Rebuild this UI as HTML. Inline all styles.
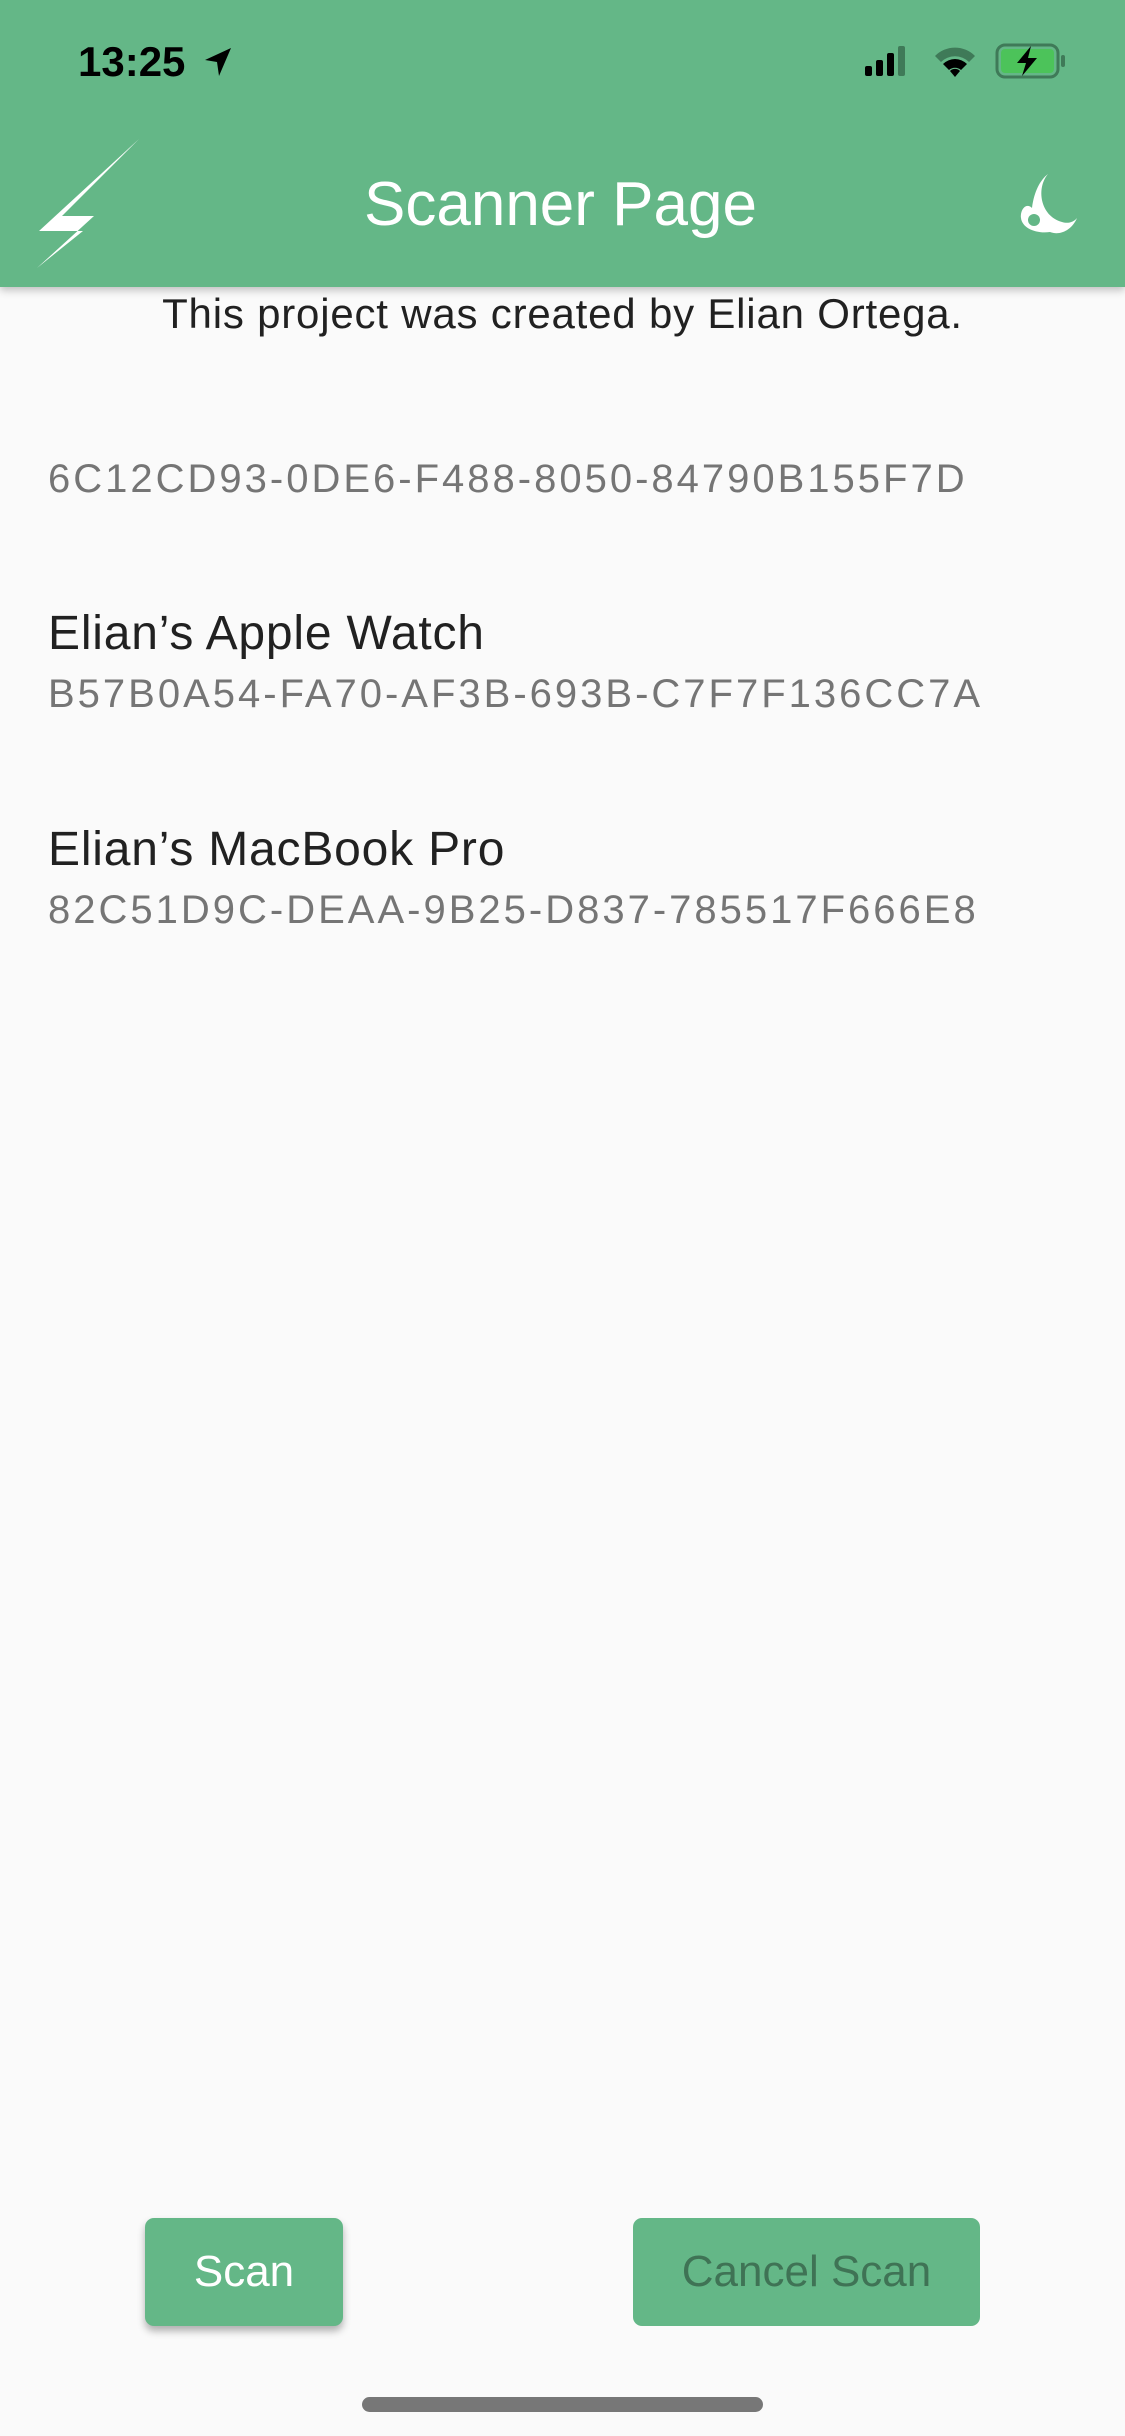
<!DOCTYPE html>
<html><head><meta charset="utf-8"><style>
*{margin:0;padding:0;box-sizing:border-box}
body{width:1125px;height:2436px;background:#fafafa;font-family:"Liberation Sans",sans-serif;position:relative;overflow:hidden}
.hdr{position:absolute;left:0;top:0;width:1125px;height:287px;background:#64b787;box-shadow:0 3px 8px rgba(0,0,0,.25)}
.abs{position:absolute;white-space:nowrap}
.uuid{font-size:40px;color:#757575;letter-spacing:3px;left:48px}
.name{font-size:48px;color:#212121;left:48px;letter-spacing:.8px}
.btn{position:absolute;background:#64b787;border-radius:9px;display:flex;align-items:center;justify-content:center;font-size:44px}
</style></head><body>
<div class="hdr">
 <div class="abs" style="left:78px;top:38px;font-size:42px;font-weight:bold;color:#000">13:25</div>
 <svg class="abs" style="left:203px;top:46px" width="30" height="32" viewBox="0 0 30 32"><path d="M28 2 L2 14 L14 16 L16 30 Z" fill="#000"/></svg>
 <svg class="abs" style="left:865px;top:44px" width="50" height="34"><rect x="0" y="22" width="7" height="10" rx="2" fill="#000"/><rect x="11" y="16" width="7" height="16" rx="2" fill="#000"/><rect x="22" y="9" width="7" height="23" rx="2" fill="#000"/><rect x="33" y="2" width="7" height="30" rx="2" fill="#3f7a58"/></svg>
 <svg class="abs" style="left:932px;top:44px" width="46" height="34" viewBox="0 0 46 34"><path d="M3 12 A28 28 0 0 1 43 12 L37 18 A20 20 0 0 0 9 18Z" fill="#3f7a58"/><path d="M11 20 A17 17 0 0 1 35 20 L29 26 A9 9 0 0 0 17 26Z" fill="#000"/><path d="M18 27 A7 7 0 0 1 28 27 L23 33Z" fill="#000"/></svg>
 <svg class="abs" style="left:995px;top:43px" width="72" height="36" viewBox="0 0 72 36"><rect x="2" y="2" width="61" height="32" rx="8" fill="none" stroke="#3f7a58" stroke-width="3"/><rect x="6" y="6" width="53" height="24" rx="4" fill="#4cc35a"/><rect x="66" y="12" width="4" height="12" rx="2" fill="#3f7a58"/><path d="M36 3 L22 20 L31 20 L27 33 L42 15 L33 15 Z" fill="#000"/></svg>
 <svg class="abs" style="left:0;top:0" width="160" height="287"><path d="M139 139 L39 231 L83 231 L37 268 L94 216 L62 216 Z" fill="#fff"/></svg>
 <div class="abs" style="left:364px;top:169px;font-size:62px;color:#fff">Scanner Page</div>
 <svg class="abs" style="left:1018px;top:172px" width="62" height="64" viewBox="0 0 62 64"><path d="M30 2 C18 16 22 44 44 50 C50 52 56 50 59 46 C54 58 42 64 32 60 C18 62 4 56 3 46 C2 38 8 30 14 36 C16 20 22 8 30 2Z" fill="#fff"/><circle cx="16" cy="48" r="6" fill="#64b787"/></svg>
</div>
<div class="abs" style="left:0;width:1125px;text-align:center;top:290px;font-size:42px;color:#212121;letter-spacing:.8px">This project was created by Elian Ortega.</div>
<div class="abs uuid" style="top:457px">6C12CD93-0DE6-F488-8050-84790B155F7D</div>
<div class="abs name" style="top:606px">Elian’s Apple Watch</div>
<div class="abs uuid" style="top:672px">B57B0A54-FA70-AF3B-693B-C7F7F136CC7A</div>
<div class="abs name" style="top:822px">Elian’s MacBook Pro</div>
<div class="abs uuid" style="top:888px">82C51D9C-DEAA-9B25-D837-785517F666E8</div>
<div class="btn" style="left:145px;top:2218px;width:198px;height:108px;color:#fff;box-shadow:0 5px 8px rgba(0,0,0,.3)">Scan</div>
<div class="btn" style="left:633px;top:2218px;width:347px;height:108px;color:#3f7355">Cancel Scan</div>
<div class="abs" style="left:362px;top:2397px;width:401px;height:15px;border-radius:8px;background:#777"></div>
</body></html>
